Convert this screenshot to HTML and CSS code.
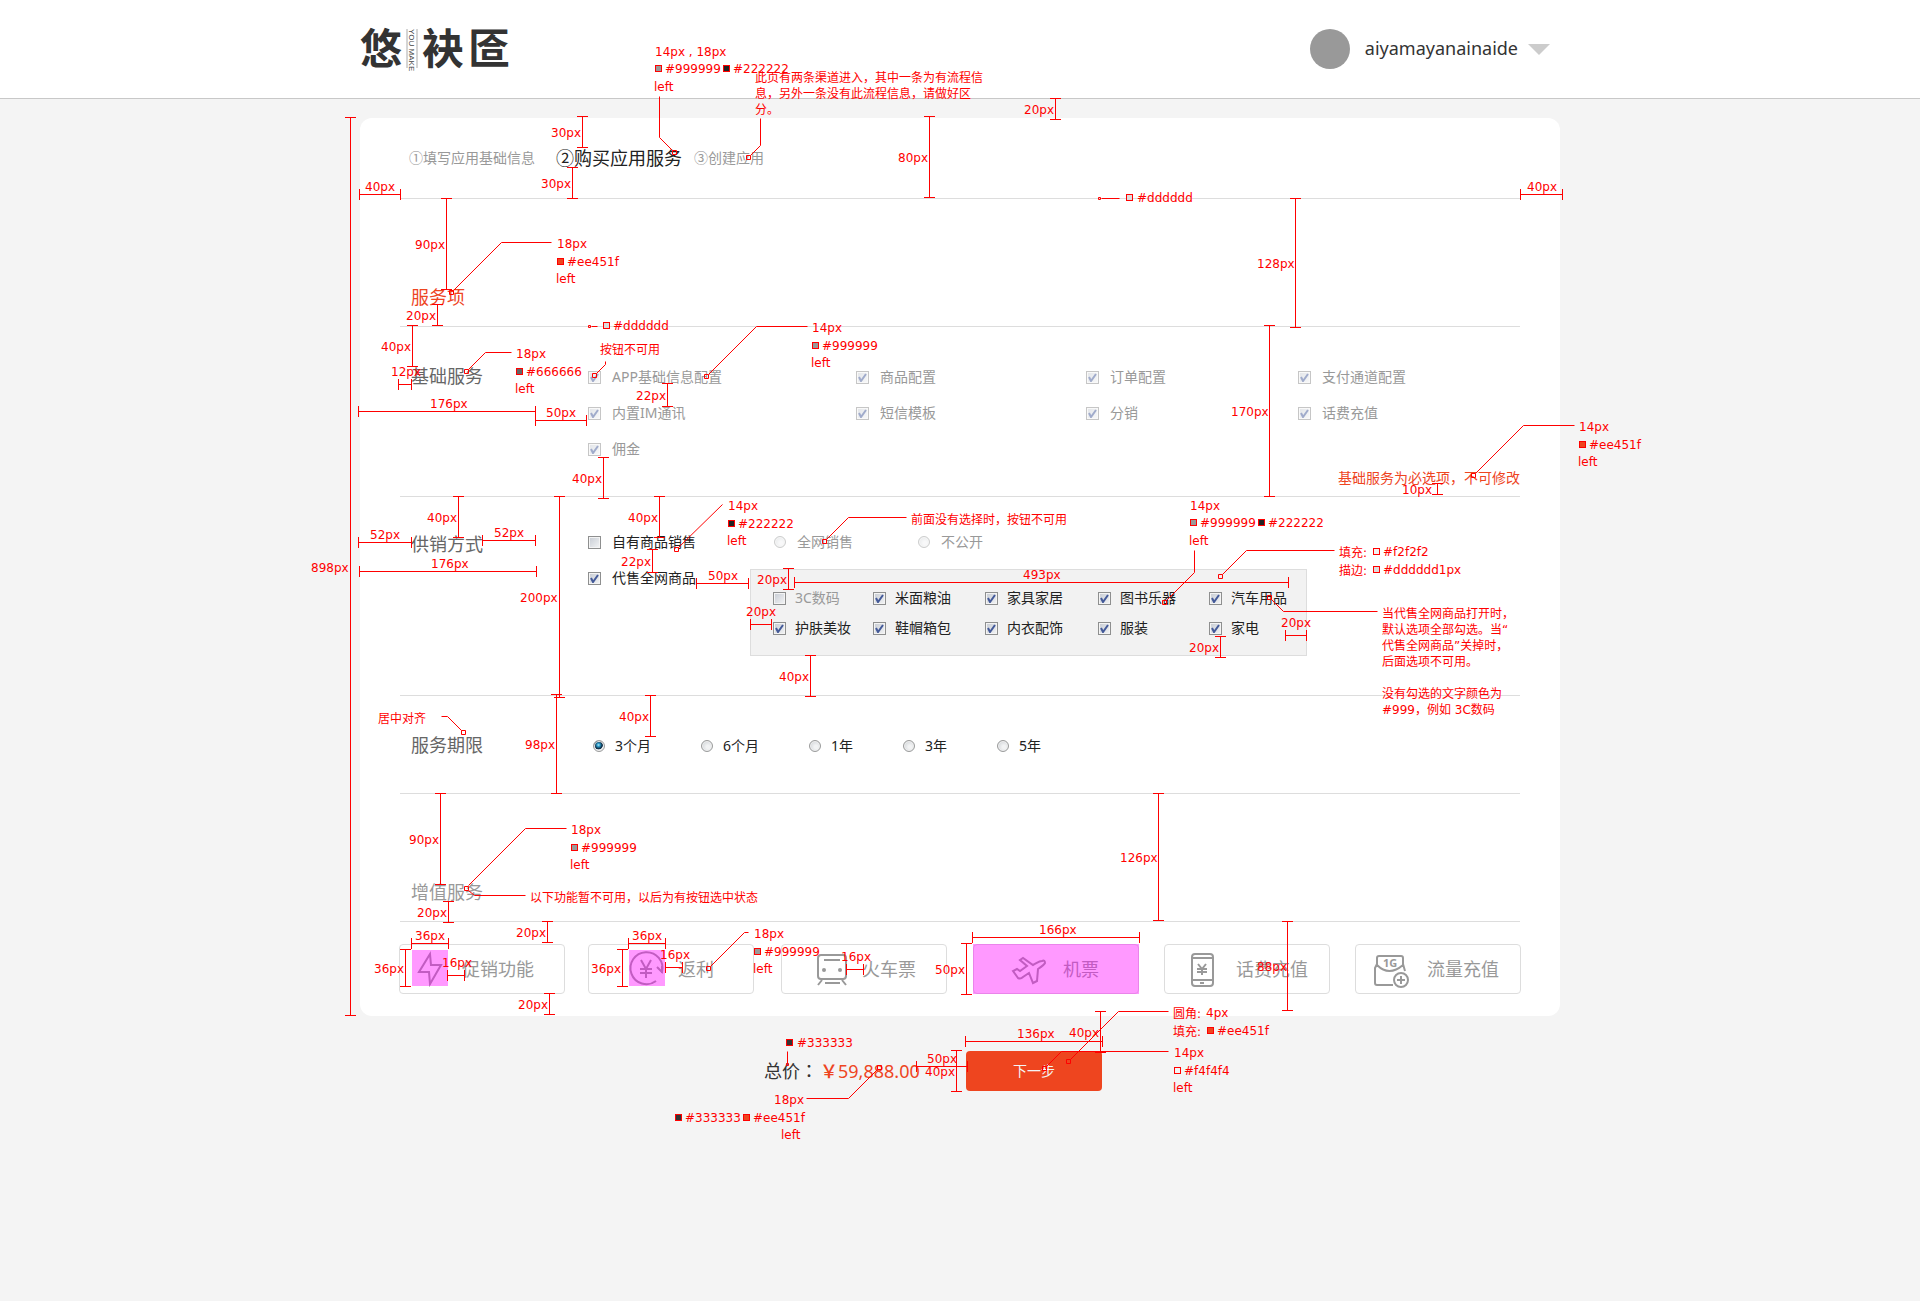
FILE: index.html
```html
<!DOCTYPE html>
<html lang="zh-CN">
<head>
<meta charset="utf-8">
<meta name="viewport" content="width=device-width, initial-scale=1">
<title>购买应用服务</title>
<link rel="stylesheet" href="styles.css">
</head>
<body>
<header class="topbar">
  <div class="topbar-inner">
    <a class="logo" href="#" aria-label="悠袂匼 YOU MAKE">
      <svg width="152" height="70" viewBox="0 0 152 70">
        <text class="logo-char" x="0" y="50">悠</text>
        <path d="M47 15V54M57 15V54" stroke="#aaa" fill="none"/>
        <text class="logo-latin" transform="translate(49 15) rotate(90)">YOU MAKE</text>
        <text class="logo-char" x="62" y="50">袂</text>
        <text class="logo-char" x="108" y="50">匼</text>
      </svg>
    </a>
    <button class="user" type="button">
      <span class="avatar"></span>
      <span class="user-name">aiyamayanainaide</span>
      <span class="caret"></span>
    </button>
  </div>
</header>

<main class="container">
  <form>
  <div class="card">
    <ol class="steps">
      <li class="step">①填写应用基础信息</li>
      <li class="step step-current">②购买应用服务</li>
      <li class="step">③创建应用</li>
    </ol>

    <div class="section-title"><h2 class="title title-accent">服务项</h2></div>

    <section class="row row-basic">
      <h3 class="title">基础服务</h3>
      <div class="row-body">
        <div class="basic-grid">
          <label class="option option-off"><input class="check" type="checkbox" checked disabled>APP基础信息配置</label>
          <label class="option option-off"><input class="check" type="checkbox" checked disabled>商品配置</label>
          <label class="option option-off"><input class="check" type="checkbox" checked disabled>订单配置</label>
          <label class="option option-off"><input class="check" type="checkbox" checked disabled>支付通道配置</label>
          <label class="option option-off"><input class="check" type="checkbox" checked disabled>内置IM通讯</label>
          <label class="option option-off"><input class="check" type="checkbox" checked disabled>短信模板</label>
          <label class="option option-off"><input class="check" type="checkbox" checked disabled>分销</label>
          <label class="option option-off"><input class="check" type="checkbox" checked disabled>话费充值</label>
          <label class="option option-off"><input class="check" type="checkbox" checked disabled>佣金</label>
        </div>
        <p class="hint">基础服务为必选项，不可修改</p>
      </div>
    </section>

    <section class="row row-supply">
      <h3 class="title">供销方式</h3>
      <div class="row-body supply">
        <div class="supply-modes">
          <label class="option"><input class="check" type="checkbox">自有商品销售</label>
          <label class="option"><input class="check" type="checkbox" checked>代售全网商品</label>
        </div>
        <div class="supply-detail">
          <div class="scope">
            <label class="option option-off"><input class="radio" type="radio" name="scope" disabled>全网销售</label>
            <label class="option option-off"><input class="radio" type="radio" name="scope" disabled>不公开</label>
          </div>
          <div class="panel">
            <label class="option option-off"><input class="check" type="checkbox">3C数码</label>
            <label class="option"><input class="check" type="checkbox" checked>米面粮油</label>
            <label class="option"><input class="check" type="checkbox" checked>家具家居</label>
            <label class="option"><input class="check" type="checkbox" checked>图书乐器</label>
            <label class="option"><input class="check" type="checkbox" checked>汽车用品</label>
            <label class="option"><input class="check" type="checkbox" checked>护肤美妆</label>
            <label class="option"><input class="check" type="checkbox" checked>鞋帽箱包</label>
            <label class="option"><input class="check" type="checkbox" checked>内衣配饰</label>
            <label class="option"><input class="check" type="checkbox" checked>服装</label>
            <label class="option"><input class="check" type="checkbox" checked>家电</label>
          </div>
        </div>
      </div>
    </section>

    <section class="row row-period">
      <h3 class="title">服务期限</h3>
      <div class="row-body periods">
        <label class="option"><input class="radio" type="radio" name="period" checked>3个月</label>
        <label class="option"><input class="radio" type="radio" name="period">6个月</label>
        <label class="option"><input class="radio" type="radio" name="period">1年</label>
        <label class="option"><input class="radio" type="radio" name="period">3年</label>
        <label class="option"><input class="radio" type="radio" name="period">5年</label>
      </div>
    </section>

    <div class="section-title"><h2 class="title title-muted">增值服务</h2></div>

    <div class="extras">
      <button class="extra extra-start" type="button">
        <svg class="icon" viewBox="0 0 36 36"><path d="M18 3 7 21h10l1 12 11-19H19z"/></svg>促销功能
      </button>
      <button class="extra" type="button">
        <svg class="icon" viewBox="0 0 36 36"><path d="M28 30A16 16 0 1 1 34 21L29 16M34 22V15M13 9l5 9 5-9M18 18v9M12 18h12M12 22h12"/></svg>返利
      </button>
      <button class="extra" type="button">
        <svg class="icon" viewBox="0 0 36 36"><rect x="6" y="4" width="28" height="24" rx="3"/><path d="M12 9h16M13 32h15M10 29l-4 5M30 29l4 5"/><circle class="solid" cx="12" cy="19" r="2"/><circle class="solid" cx="28" cy="19" r="2"/></svg>火车票
      </button>
      <button class="extra" type="button">
        <svg class="icon" viewBox="0 0 36 36"><path d="M0 20l5 7c2 1 4 0 5-1l6-4 4 10 4-2 1-12c3-2 6-4 7-6 0-2-1-3-3-2-3 0-5 2-9 4L10 7 7 9l7 6-7 5-3-2z"/></svg>机票
      </button>
      <button class="extra" type="button">
        <svg class="icon" viewBox="0 0 36 36"><rect x="6" y="3" width="21" height="32" rx="3"/><path d="M6 7h21M6 29h21M14 32h4M12 13l4 5 4-5M16 18v6M11 18h10M11 21h10"/></svg>话费充值
      </button>
      <button class="extra" type="button">
        <svg class="icon" viewBox="3 0 36 36"><path d="M3 16V7q0-2 2-2h22q2 0 2 2v9M3 14q12 12 26 0M3 13L1 17v15q0 2 2 2h16M29 13l2 7"/><circle cx="27" cy="29" r="7"/><path d="M23 29h8M27 25v8"/><text class="icon-text" x="9" y="16">1G</text></svg>流量充值
      </button>
    </div>
  </div>

  <div class="checkout">
    <p class="total">总价<span class="mark" lang="zh-TW">：</span><span class="price"><span class="yen">￥</span>59,888.00</span></p>
    <button class="next" type="submit">下一步</button>
  </div>
  </form>
</main>

<svg class="specs" viewBox="300 0 1360 1160" width="1360" height="1160">
  <defs>
    <marker id="cap" markerUnits="userSpaceOnUse" markerWidth="1" markerHeight="11" viewBox="0 0 1 11" refX="0.5" refY="5.5" orient="auto"><rect width="1" height="11" fill="red"/></marker>
  </defs>

  <g class="areas">
    <rect x="412" y="950" width="36" height="36"/>
    <rect x="629" y="950" width="36" height="36"/>
    <rect x="973" y="944" width="166" height="50"/>
  </g>

  <g class="dims" transform="translate(0.5 0.5)">
    <path d="M350 117V1015"/><path d="M582 116V147"/><path d="M572 167V198"/><path d="M359 194H400"/>
    <path d="M446 198V289"/><path d="M929 116V197"/><path d="M1055 98V119"/><path d="M1295 198V327"/>
    <path d="M1520 194H1562"/><path d="M1269 325V496"/><path d="M437 304V325"/><path d="M412 325V366"/>
    <path d="M398 384H411"/><path d="M358 411H535"/><path d="M535 420H586"/><path d="M667 383V406"/>
    <path d="M603 457V498"/><path d="M1437 483V494"/><path d="M794 582H1288"/><path d="M1285 635H1306"/>
    <path d="M1220 636V657"/><path d="M458 496V537"/><path d="M358 542H411"/><path d="M482 540H535"/>
    <path d="M359 571H536"/><path d="M559 496V697"/><path d="M556 694V793"/><path d="M659 496V537"/>
    <path d="M650 695V736"/><path d="M652 549V572"/><path d="M696 583H748"/><path d="M440 793V884"/>
    <path d="M788 568V589"/><path d="M750 624H771"/><path d="M810 655V696"/><path d="M448 901V922"/>
    <path d="M547 921V942"/><path d="M411 943H448"/><path d="M405 949V986"/><path d="M447 975H464"/>
    <path d="M628 943H665"/><path d="M622 949V986"/><path d="M665 967H682"/><path d="M549 993V1014"/>
    <path d="M846 969H863"/><path d="M1158 793V920"/><path d="M972 937H1139"/><path d="M966 943V994"/>
    <path d="M965 1041H1102"/><path d="M1100 1011V1052"/><path d="M916 1066H967"/><path d="M956 1050V1091"/>
    <path d="M1287 921V1010"/>
  </g>

  <g class="leaders" transform="translate(0.5 0.5)">
    <path d="M659 96V137L672 150M672 150h4v4h-4z"/>
    <path d="M760 118V145L750 155M746 155h4v4h-4z"/>
    <path d="M1098 197h2v2h-2zM1101 198H1119"/>
    <path d="M551 242H501L453 290M449 290h4v4h-4z"/>
    <path d="M511 352H485L468 369M464 369h4v4h-4z"/>
    <path d="M588 325h2v2h-2zM591 326H597"/>
    <path d="M605 361V364L596 373M592 373h4v4h-4z"/>
    <path d="M807 326H756L708 374M704 374h4v4h-4z"/>
    <path d="M1574 425H1523L1475 473M1471 473h4v4h-4z"/>
    <path d="M1194 550V572L1166 600M1162 600h4v4h-4z"/>
    <path d="M1334 550H1246L1222 574M1218 574h4v4h-4z"/>
    <path d="M1377 611H1283L1271 599M1267 595h4v4h-4z"/>
    <path d="M722 504L678 547M674 547h4v4h-4z"/>
    <path d="M441 716H447L461 730M461 730h4v4h-4z"/>
    <path d="M906 517H848L826 539M822 539h4v4h-4z"/>
    <path d="M566 828H525L468 885M464 886h4v4h-4zM468 890L474 895H525"/>
    <path d="M748 932H744L710 966M706 966h4v4h-4z"/>
    <path d="M787 1051V1063M786 1063h2v2h-2z"/>
    <path d="M806 1098H848L877 1069M877 1065h4v4h-4z"/>
    <path d="M1168 1011H1118L1070 1059M1066 1059h4v4h-4z"/>
    <path d="M1168 1051H1061L1046 1066M1042 1066h4v4h-4z"/>
  </g>

  <g class="swatches" transform="translate(0.5 0.5)">
    <rect x="655" y="65" width="6" height="6" fill="#999999"/>
    <rect x="723" y="65" width="6" height="6" fill="#222222"/>
    <rect x="1126" y="194" width="6" height="6" fill="#dddddd"/>
    <rect x="557" y="258" width="6" height="6" fill="#ee451f"/>
    <rect x="516" y="368" width="6" height="6" fill="#666666"/>
    <rect x="603" y="322" width="6" height="6" fill="#dddddd"/>
    <rect x="812" y="342" width="6" height="6" fill="#999999"/>
    <rect x="1579" y="441" width="6" height="6" fill="#ee451f"/>
    <rect x="1190" y="519" width="6" height="6" fill="#999999"/>
    <rect x="1258" y="519" width="6" height="6" fill="#222222"/>
    <rect x="1373" y="548" width="6" height="6" fill="#f2f2f2"/>
    <rect x="1373" y="566" width="6" height="6" fill="#dddddd"/>
    <rect x="728" y="520" width="6" height="6" fill="#222222"/>
    <rect x="571" y="844" width="6" height="6" fill="#999999"/>
    <rect x="754" y="948" width="6" height="6" fill="#999999"/>
    <rect x="786" y="1039" width="6" height="6" fill="#333333"/>
    <rect x="675" y="1114" width="6" height="6" fill="#333333"/>
    <rect x="743" y="1114" width="6" height="6" fill="#ee451f"/>
    <rect x="1207" y="1027" width="6" height="6" fill="#ee451f"/>
    <rect x="1174" y="1067" width="6" height="6" fill="#f4f4f4"/>
  </g>

  <g class="notes">
    <text x="655" y="56">14px , 18px</text><text x="665" y="73">#999999</text><text x="733" y="73">#222222</text><text x="654" y="91">left</text>
    <text x="755" y="82">此页有两条渠道进入，其中一条为有流程信</text><text x="755" y="98">息，另外一条没有此流程信息，请做好区</text><text x="755" y="114">分。</text>
    <text x="551" y="137">30px</text><text x="541" y="188">30px</text><text x="365" y="191">40px</text><text x="415" y="249">90px</text>
    <text x="898" y="162">80px</text><text x="1024" y="114">20px</text><text x="1137" y="202">#dddddd</text>
    <text x="1257" y="268">128px</text><text x="1527" y="191">40px</text><text x="1231" y="416">170px</text>
    <text x="557" y="248">18px</text><text x="567" y="266">#ee451f</text><text x="556" y="283">left</text>
    <text x="406" y="320">20px</text><text x="381" y="351">40px</text><text x="391" y="376">12px</text>
    <text x="516" y="358">18px</text><text x="526" y="376">#666666</text><text x="515" y="393">left</text>
    <text x="430" y="408">176px</text><text x="546" y="417">50px</text><text x="613" y="330">#dddddd</text>
    <text x="600" y="354">按钮不可用</text><text x="636" y="400">22px</text>
    <text x="812" y="332">14px</text><text x="822" y="350">#999999</text><text x="811" y="367">left</text>
    <text x="572" y="483">40px</text>
    <text x="1579" y="431">14px</text><text x="1589" y="449">#ee451f</text><text x="1578" y="466">left</text><text x="1402" y="494">10px</text>
    <text x="1190" y="510">14px</text><text x="1200" y="527">#999999</text><text x="1268" y="527">#222222</text><text x="1189" y="545">left</text>
    <text x="1339" y="557">填充:</text><text x="1383" y="556">#f2f2f2</text><text x="1339" y="575">描边:</text><text x="1383" y="574">#dddddd1px</text>
    <text x="1023" y="579">493px</text>
    <text x="1382" y="618">当代售全网商品打开时，</text><text x="1382" y="634">默认选项全部勾选。当“</text><text x="1382" y="650">代售全网商品”关掉时，</text><text x="1382" y="666">后面选项不可用。</text>
    <text x="1382" y="698">没有勾选的文字颜色为</text><text x="1382" y="714">#999，例如 3C数码</text>
    <text x="1281" y="627">20px</text><text x="1189" y="652">20px</text>
    <text x="311" y="572">898px</text><text x="427" y="522">40px</text><text x="370" y="539">52px</text><text x="494" y="537">52px</text>
    <text x="431" y="568">176px</text><text x="520" y="602">200px</text><text x="525" y="749">98px</text><text x="628" y="522">40px</text>
    <text x="619" y="721">40px</text><text x="621" y="566">22px</text>
    <text x="728" y="510">14px</text><text x="738" y="528">#222222</text><text x="727" y="545">left</text><text x="708" y="580">50px</text>
    <text x="378" y="723">居中对齐</text><text x="409" y="844">90px</text>
    <text x="911" y="524">前面没有选择时，按钮不可用</text><text x="757" y="584">20px</text><text x="746" y="616">20px</text><text x="779" y="681">40px</text>
    <text x="571" y="834">18px</text><text x="581" y="852">#999999</text><text x="570" y="869">left</text>
    <text x="530" y="902">以下功能暂不可用，以后为有按钮选中状态</text>
    <text x="417" y="917">20px</text><text x="516" y="937">20px</text><text x="415" y="940">36px</text><text x="374" y="973">36px</text><text x="442" y="967">16px</text>
    <text x="632" y="940">36px</text><text x="591" y="973">36px</text><text x="660" y="959">16px</text><text x="518" y="1009">20px</text>
    <text x="754" y="938">18px</text><text x="764" y="956">#999999</text><text x="753" y="973">left</text>
    <text x="841" y="961">16px</text><text x="1120" y="862">126px</text><text x="1039" y="934">166px</text><text x="935" y="974">50px</text>
    <text x="1017" y="1038">136px</text><text x="1069" y="1037">40px</text><text x="927" y="1063">50px</text><text x="925" y="1076">40px</text>
    <text x="797" y="1047">#333333</text><text x="774" y="1104">18px</text>
    <text x="685" y="1122">#333333</text><text x="753" y="1122">#ee451f</text><text x="781" y="1139">left</text>
    <text x="1173" y="1018">圆角:</text><text x="1206" y="1017">4px</text><text x="1173" y="1036">填充:</text><text x="1217" y="1035">#ee451f</text>
    <text x="1174" y="1057">14px</text><text x="1184" y="1075">#f4f4f4</text><text x="1173" y="1092">left</text><text x="1257" y="971">88px</text>
  </g>
</svg>
</body>
</html>
```

FILE: styles.css
```css
* {
  box-sizing: border-box;
}

body {
  position: relative;
  margin: 0;
  min-height: 100vh;
  background: #f4f4f4;
  color: #222;
  font-family: "Noto Sans", "Noto Sans CJK SC", sans-serif;
  font-size: 14px;
  line-height: 20px;
}

h2, h3, p, ol {
  margin: 0;
  padding: 0;
}

button {
  padding: 0;
  border: 0;
  background: none;
  font: inherit;
  cursor: pointer;
}

/* Header */
.topbar {
  background: #fff;
  border-bottom: 1px solid #c8c8c8;
}

.topbar-inner {
  display: flex;
  align-items: center;
  justify-content: space-between;
  max-width: 1200px;
  height: 98px;
  margin: 0 auto;
  padding-right: 10px;
}

.logo svg {
  display: block;
}

.logo-char {
  fill: #333;
  font-family: "Noto Sans CJK SC", sans-serif;
  font-size: 42px;
  font-weight: 700;
}

.logo-latin {
  fill: #444;
  font-family: "Liberation Sans", sans-serif;
  font-size: 8px;
}

.user {
  display: flex;
  align-items: center;
}

.avatar {
  width: 40px;
  height: 40px;
  border-radius: 50%;
  background: #999;
}

.user-name {
  margin: 0 10px 2px 15px;
  color: #333;
  font-size: 18px;
  line-height: 24px;
}

.caret {
  border: 11px solid transparent;
  border-top-color: #ccc;
  border-bottom: 0;
}

/* Card */
.container {
  max-width: 1200px;
  margin: 0 auto;
  padding-top: 19px;
}

.card {
  padding: 0 40px;
  border-radius: 12px;
  background: #fff;
}

.steps {
  display: flex;
  align-items: center;
  height: 81px;
  padding: 0 0 2px 9px;
  border-bottom: 1px solid #ddd;
  list-style: none;
}

.step {
  color: #999;
  font-family: "Noto Sans CJK SC", sans-serif;
}

.step-current {
  margin: 0 12px 0 21px;
  color: #222;
  font-size: 18px;
  line-height: 24px;
}

.title {
  padding-left: 11px;
  color: #666;
  font-size: 18px;
  font-weight: 400;
  line-height: 24px;
}

.title-accent {
  color: #ee451f;
}

.title-muted {
  color: #999;
}

.section-title {
  padding: 86px 0 17px;
  border-bottom: 1px solid #ddd;
}

.row {
  display: grid;
  grid-template-columns: 188px 1fr;
  border-bottom: 1px solid #ddd;
}

.row-basic {
  padding: 37px 0 8px;
}

.row-supply {
  padding: 35px 0 39px;
}

.row-period {
  padding: 37px 0 36px;
}

.option {
  display: flex;
  align-items: center;
  gap: 11px;
  color: #222;
  white-space: nowrap;
}

.option-off {
  color: #999;
}

.basic-grid {
  display: grid;
  grid-template-columns: 268fr 230fr 212fr 222fr;
  row-gap: 16px;
  padding-top: 3px;
}

.hint {
  margin-top: 9px;
  color: #ee451f;
  text-align: right;
}

.supply {
  display: flex;
}

.supply-modes {
  display: flex;
  flex-direction: column;
  gap: 16px;
  width: 162px;
}

.scope {
  display: flex;
  gap: 65px;
  padding: 0 0 17px 24px;
}

.panel {
  display: grid;
  grid-template-columns: 100px 112px 113px 111px auto;
  row-gap: 10px;
  width: 557px;
  height: 87px;
  padding: 18px 20px 18px 22px;
  border: 1px solid #ddd;
  background: #f2f2f2;
}

.panel .option {
  gap: 9px;
}

.periods {
  display: flex;
  gap: 50px;
  padding: 2px 0 0 5px;
}

.periods .option {
  gap: 10px;
}

/* Tick boxes and radios */
.check,
.radio {
  flex: none;
  margin: 0;
  appearance: none;
}

.check {
  width: 13px;
  height: 13px;
  border: 1px solid #8e8f8f;
  background: linear-gradient(135deg, #c6cbd3, #f4f5f6) padding-box;
  box-shadow: inset 0 0 0 1px #f4f4f4;
}

.check:checked {
  background: url("data:image/svg+xml,%3Csvg xmlns='http://www.w3.org/2000/svg' viewBox='0 0 11 11'%3E%3Cpath d='M2 5l2 4 5-7' fill='none' stroke='%23445a99' stroke-width='2'/%3E%3C/svg%3E"), linear-gradient(135deg, #c6cbd3, #f4f5f6);
}

.radio {
  width: 12px;
  height: 12px;
  border: 1px solid #9a9b9b;
  border-radius: 50%;
  background: radial-gradient(circle at 60% 60%, #f2f3f4 20%, #cdd1d5 90%);
  box-shadow: inset 0 0 0 1px #f0f0f0;
}

.radio:checked {
  background: radial-gradient(circle at 45% 40%, #b4e8f8 0, #2a9ac8 20%, #12344e 42%, #12344e 50%, #e8eaec 58%);
}

.check:disabled,
.radio:disabled {
  opacity: 0.5;
}

/* Extra services */
.extras {
  display: grid;
  grid-template-columns: 189fr 193fr 192fr 191fr 191fr 166fr;
  margin: 0 -1px;
  padding: 22px 0;
}

.extra {
  display: flex;
  align-items: center;
  justify-content: center;
  gap: 14px;
  width: 166px;
  height: 50px;
  border: 1px solid #ddd;
  border-radius: 4px;
  color: #999;
  font-size: 18px;
  white-space: nowrap;
}

.extra-start {
  justify-content: flex-start;
  padding-left: 12px;
}

.icon {
  flex: none;
  width: 36px;
  height: 36px;
  overflow: visible;
  fill: none;
  stroke: #999;
  stroke-width: 2;
}

.icon .solid {
  fill: #999;
  stroke: none;
}

.icon circle {
  fill: #fff;
}

.icon-text {
  fill: #999;
  stroke: none;
  font-size: 11px;
  font-weight: 700;
}

/* Total and submit */
.checkout {
  display: flex;
  align-items: center;
  padding: 35px 0 0 404px;
}

.total {
  width: 202px;
  color: #333;
  font-size: 18px;
  line-height: 24px;
  white-space: nowrap;
}

/* Full-width colon centred in its cell */
.mark {
  font-family: "Noto Sans CJK TC", sans-serif;
  line-height: 1;
}

.price {
  margin-left: 2px;
  color: #ee451f;
}

.yen {
  font-weight: 500;
  line-height: 1;
}

.next {
  width: 136px;
  height: 40px;
  border-radius: 4px;
  background: #ee451f;
  color: #f4f4f4;
}

/* Spec layer drawn over the page */
.specs {
  position: absolute;
  top: 0;
  left: calc(50% - 660px);
  pointer-events: none;
}

.areas {
  fill: #f0f;
  fill-opacity: 0.4;
}

.dims path {
  stroke: #f00;
  marker-start: url(#cap);
  marker-end: url(#cap);
}

.leaders {
  fill: none;
  stroke: #f00;
}

.swatches {
  stroke: #f00;
}

.notes {
  fill: #f00;
  font-family: "DejaVu Sans", "Noto Sans CJK SC", sans-serif;
  font-size: 12px;
}
```
